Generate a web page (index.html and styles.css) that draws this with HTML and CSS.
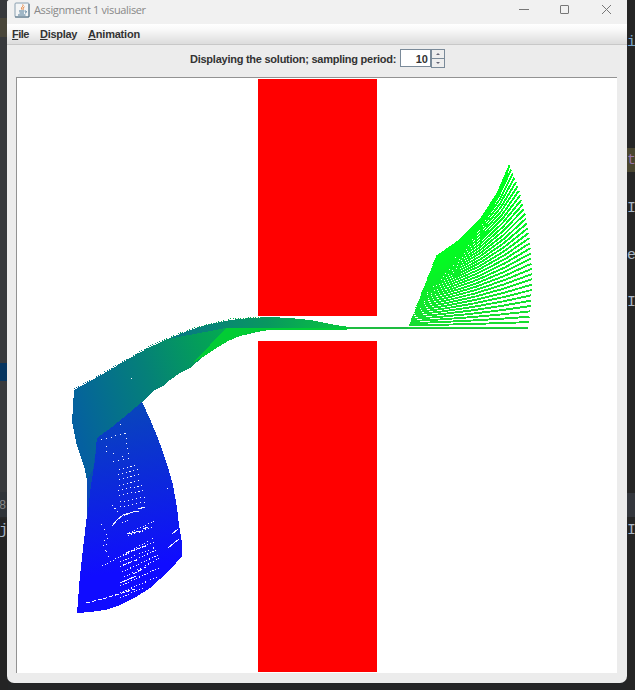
FILE: index.html
```html
<!DOCTYPE html>
<html lang="en">
<head>
<meta charset="utf-8">
<title>Assignment 1 visualiser</title>
<link rel="stylesheet" href="styles.css">
</head>
<body>
<div class="editor editor-left">
  <i class="band olive"></i><i class="band navy"></i><i class="band slate"></i>
  <span class="code line-num">8</span><span class="code left-j">j</span>
</div>
<div class="editor editor-right">
  <i class="band mark"></i><i class="band row"></i>
  <span class="code c1">i</span><span class="code c2">t</span><span class="code c3">I</span><span class="code c4">e</span><span class="code c5">I</span><span class="code c6">I</span>
</div>
<main class="window">
  <header class="titlebar">
    <svg class="java" width="16" height="16" viewBox="0 0 16 16" fill="none">
      <rect x="1" y="1" width="14" height="14" rx="1" fill="#f3f5f6" stroke="#8aa0b0"/>
      <path d="M1 15h14V2" stroke="#557184"/>
      <path d="M8.8 2.5c1.4 2-2.6 2.5-.8 5.2M10.5 4.8c-2 1-1.200 1.700-1.200 2.900" stroke="#e9792b"/>
      <path d="M5 9h5.500M5.500 11h4.500M4 13h7.500M11 9c2-.3 2 1.700 0 2" stroke="#4f7896"/>
    </svg>
    <h1>Assignment 1 visualiser</h1>
    <svg class="controls" width="96" height="12" viewBox="0 0 96 12" fill="none" stroke="#777">
      <path d="M0 5.500h10"/><rect x="41.500" y="1.500" width="8" height="8" rx=".5"/><path d="M83 1l9 9M92 1l-9 9"/>
    </svg>
  </header>
  <nav class="menubar">
    <span class="m-file"><u>F</u>ile</span><span class="m-display"><u>D</u>isplay</span><span class="m-animation"><u>A</u>nimation</span>
  </nav>
  <div class="toolbar">
    <label>Displaying the solution; sampling period:</label>
    <div class="spinner"><span class="value">10</span><div class="arrows"><b class="up"></b><b class="down"></b></div></div>
  </div>
  <div class="canvas">
    <svg width="600" height="595" viewBox="17 78 600 595" shape-rendering="crispEdges">
      <defs>
        <linearGradient id="teal" gradientUnits="userSpaceOnUse" x1="75" y1="425" x2="275" y2="360">
          <stop offset="0" stop-color="#0560a0"/><stop offset=".4" stop-color="#058078"/><stop offset=".7" stop-color="#04a058"/><stop offset="1" stop-color="#04b848"/>
        </linearGradient>
        <linearGradient id="upper" gradientUnits="userSpaceOnUse" x1="75" y1="0" x2="350" y2="0">
          <stop offset="0" stop-color="#0560a0"/><stop offset=".45" stop-color="#08807c"/><stop offset=".7" stop-color="#08985f"/><stop offset="1" stop-color="#08c83c"/>
        </linearGradient>
        <linearGradient id="blue" gradientUnits="userSpaceOnUse" x1="100" y1="405" x2="130" y2="570">
          <stop offset="0" stop-color="#0848b8"/><stop offset=".45" stop-color="#0c2cd8"/><stop offset="1" stop-color="#100cff"/>
        </linearGradient>
        <linearGradient id="edge" gradientUnits="userSpaceOnUse" x1="0" y1="420" x2="0" y2="540">
          <stop offset="0" stop-color="#0560a0"/><stop offset=".5" stop-color="#0850b0"/><stop offset="1" stop-color="#0c28dc"/>
        </linearGradient>
      </defs>
      <path fill="#f00" d="M258 79h119v237H258zM258 341h119v331H258z"/>
      <path fill="url(#blue)" d="M142 402L150 419L157 436L163 452L169 471L173 485L177 508L179 525L182 543V556L171 569L160 579L150 588L136 597L120 605L105 610L90 612L77 613L80 575L84 540L87 515L87 475L90 430Z"/>
      <path fill="url(#edge)" d="M72 415L72 421L77 446L84 466L87 480L87 520L91 485L95 460L97 436Z"/>
      <path fill="url(#teal)" d="M74 390L92 380L110 370L130 358L150 347L170 338L190 330L215 326L240 324L270 328L262 331L240 336L228 341L215 349L203 357L190 368L180 373L170 380L163 386L155 390L142 402L129 413L112 427L97 438L93 470L87 480L84 466L77 446L72 421L73 407Z"/>
      <path fill="#02cc34" d="M226 328H349L408 327V329H349L345 330H270L255 332L240 336L228 341L215 349L203 357L194 362Z"/>
      <path fill="url(#upper)" d="M168 339L190 330L210 324L230 320L250 318L270 317L290 318L310 320L330 324L349 327V328H226Z"/>
      <path fill="none" stroke="url(#teal)" stroke-dasharray="1 1.500" d="M74 389L110 369L150 346L190 329L230 319L262 317"/>
      <path fill="#1ebc40" d="M348 327h180v2H348z"/>
      <path fill="#00fc20" d="M420 297L436 257L463 238L482 218L500 190L510 166L504 187L488 217L466 245L442 270Z"/>
      <g class="fan" id="fan"></g>
      <g class="specks">
        <path stroke-dasharray="1 4" d="M101 440L126 433M120 424L126 438L129 460M106 446v10M113 453l13 5M113 462L131 458"/>
        <path stroke-dasharray="1 3" d="M119 470L137 465M118 475L138 469M119 480L140 474M119 486L142 479M118 491L143 485M119 496L144 490M120 502L145 497M120 507L145 502M112 505l6 7"/>
        <path d="M112 526l5-6l6-5l10-3l6-1M138 509l7-2M127 534l14-3M143 529l5-2M120 583l16-7M168 548l11-9M172 534l6-5"/>
        <path stroke-dasharray="1 2" d="M121 517L128 514M122 523L130 519M129 533L154 521M128 536L154 527M102 566L112 561L130 551L154 538M120 557L156 541M120 562L156 547M120 567L156 550M122 572L158 555M124 577L160 558M120 586L159 568M120 593L157 577M120 598L145 587"/>
        <path stroke-dasharray="4 2" d="M86 603L106 598L122 593L135 589M123 565l14-5M126 553l20-7M133 574l13-7"/>
        <path stroke-dasharray="1 5" d="M101 524l6 10l-4 10l6 13M108 538l-5 22M167 488v6M131 378v1"/>
      </g>
    </svg>
  </div>
</main>
<script src="fan.js"></script>
</body>
</html>
```
FILE: styles.css
```css
* { box-sizing: border-box; }
body { margin: 0; width: 635px; height: 690px; overflow: hidden; position: relative; background: #242526; font-family: "Liberation Sans", sans-serif; }
.editor { position: absolute; top: 0; height: 690px; overflow: hidden; }
.editor-left { left: 0; width: 8px; background: linear-gradient(#37393c 0 510px, #242424 520px); }
.editor-right { left: 626px; width: 9px; background: #252525; }
.band { position: absolute; left: 0; width: 100%; }
.olive { top: 18px; height: 19px; background: #49463a; }
.navy { top: 363px; height: 18px; background: #063560; }
.slate { top: 492px; height: 25px; background: #303439; }
.mark { top: 148px; height: 24px; background: #4a4630; }
.row { top: 493px; height: 24px; background: #33363c; }
.code { position: absolute; left: 1px; font: 15px/18px "Liberation Mono", monospace; color: #a9b7c6; }
.line-num { left: -1px; top: 497px; font-size: 12px; color: #888; }
.left-j { left: -1px; top: 522px; }
.c1 { top: 34px; left: 1px; color: #7ba7cc; }
.c2 { top: 152px; left: 1px; color: #9876aa; }
.c3 { top: 200px; }
.c4 { top: 247px; }
.c5 { top: 294px; }
.c6 { top: 522px; left: 1px; }
.window { position: relative; width: 620px; height: 683px; margin-left: 7px; background: #ececec; border-radius: 3px 0 7px 7px; overflow: hidden; }
.titlebar { height: 24px; display: flex; align-items: flex-start; background: #f1f1f1; padding: 2px 12px 0 7px; }
.titlebar h1 { margin: 0 0 0 4px; font: 11px/16px "Open Sans", sans-serif; color: #888; letter-spacing: -.35px; white-space: nowrap; }
.controls { margin: 2px 0 0 auto; }
.menubar { height: 21px; display: flex; padding-left: 5px; background: linear-gradient(#fff, #fafafa 25%, #dedede 95%); border-bottom: 1px solid #c8c8c8; font-size: 11px; font-weight: bold; line-height: 20px; color: #333; }
.menubar span { white-space: nowrap; }
.menubar u { text-underline-offset: 1px; }
.m-file { width: 28px; letter-spacing: -.5px; }
.m-display { width: 48px; letter-spacing: -.3px; }
.m-animation { letter-spacing: -.2px; }
.toolbar { height: 32px; display: flex; align-items: flex-start; padding: 4px 0 0 183px; color: #333; font-size: 11px; font-weight: bold; }
.toolbar label { width: 210px; line-height: 20px; white-space: nowrap; letter-spacing: -.25px; }
.spinner { display: flex; width: 45px; height: 19px; }
.value { width: 31px; height: 18px; border: 1px solid #7a8a99; background: #fff; text-align: right; padding-right: 2px; line-height: 18px; }
.arrows { width: 14px; }
.arrows b { display: flex; justify-content: center; align-items: center; height: 10px; border: 1px solid #7a8a99; background: #eee; }
.arrows .down { height: 10px; margin-top: -1px; }
.arrows b::after { content: ""; border: 2px solid transparent; }
.up::after { border-top: 0 !important; border-bottom-color: #667 !important; }
.down::after { border-bottom: 0 !important; border-top-color: #667 !important; }
.canvas { width: 601px; height: 596px; margin-left: 9px; background: #fff; border-top: 1px solid #929292; border-left: 1px solid #929292; }
.canvas svg { display: block; }
.fan { fill: none; stroke-width: 1.9; }
.specks { fill: none; stroke: #f4f4ff; stroke-width: 1; }
```
FILE: fan.js
```js
// Sweep of the four-link arm as it rises from horizontal to its final pose.
const fan = document.getElementById('fan');
const steps = 33;
const finalAngles = [35, 46, 57, 67];
for (let i = 0; i <= steps; i++) {
  const t = i / steps;
  let x = 408 + 28 * t;
  let y = 327.5 - 70.5 * t;
  let d = `M${x} ${y}`;
  for (const angle of finalAngles) {
    const a = angle * t * Math.PI / 180;
    x += 30 * Math.cos(a);
    y -= 30 * Math.sin(a);
    d += `L${x.toFixed(2)} ${y.toFixed(2)}`;
  }
  const path = document.createElementNS('http://www.w3.org/2000/svg', 'path');
  path.setAttribute('d', d);
  path.setAttribute('stroke', `rgb(${Math.round(24 * (1 - t))},${Math.round(220 + 35 * t)},${Math.round(50 - 18 * t)})`);
  fan.appendChild(path);
}
```
